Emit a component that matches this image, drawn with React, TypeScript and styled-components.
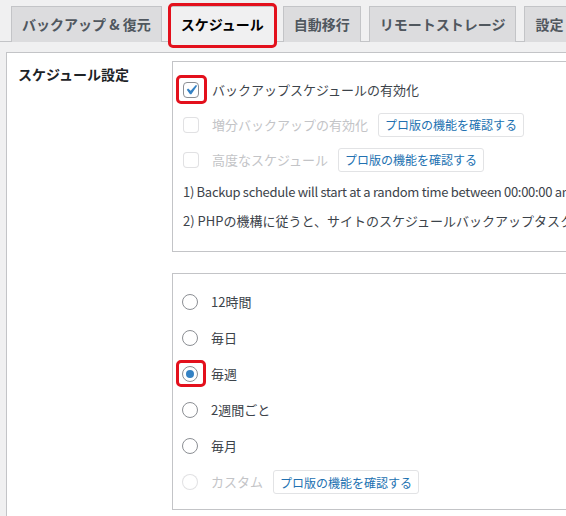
import React from "react";
import styled, { createGlobalStyle, css } from "styled-components";

const GlobalStyle = createGlobalStyle`
  html, body {
    margin: 0;
    padding: 0;
    background: #f0f0f1;
  }
  body {
    font-family: "Noto Sans CJK JP", "Noto Sans", sans-serif;
    color: #3c434a;
    font-size: 13px;
  }
`;

const Page = styled.div`
  width: 566px;
  height: 516px;
  overflow: hidden;
`;

const TabBar = styled.div`
  display: flex;
  gap: 8px;
  width: 900px;
  padding: 6px 0 0 11px;
  border-bottom: 1px solid #c3c4c7;
`;

const Tab = styled.div<{ $active?: boolean }>`
  position: relative;
  flex: none;
  padding: 5px 10px;
  line-height: 24px;
  font-size: 14px;
  font-weight: 700;
  white-space: nowrap;
  border: 1px solid #c3c4c7;
  border-bottom: none;
  margin-bottom: -1px;
  background: #dcdcde;
  color: #50575e;

  ${(p) =>
    p.$active &&
    css`
      background: #f0f0f1;
      color: #000;
      border-bottom: 1px solid #f0f0f1;
    `}
`;

const Highlight = styled.span<{ $t: number; $r: number; $b: number; $l: number }>`
  position: absolute;
  top: ${(p) => -p.$t}px;
  right: ${(p) => -p.$r}px;
  bottom: ${(p) => -p.$b}px;
  left: ${(p) => -p.$l}px;
  border: 3px solid #e3101c;
  border-radius: 5px;
  pointer-events: none;
  z-index: 2;
`;

const Panel = styled.div`
  margin: 10px 0 0 6px;
  width: 900px;
  min-height: 500px;
  background: #fff;
  border: 1px solid #c3c4c7;
  padding: 8px 0 0 11px;
  display: grid;
  grid-template-columns: 154px 1fr;
  align-items: start;
`;

const RowLabel = styled.div`
  padding-top: 3px;
  font-size: 14px;
  line-height: 20px;
  font-weight: 700;
  color: #1d2327;
`;

const Fields = styled.div`
  display: flex;
  flex-direction: column;
  gap: 21px;
`;

const Box = styled.div<{ $kind: "check" | "radio" }>`
  border: 1px solid #c3c4c7;
  background: #fff;
  ${(p) =>
    p.$kind === "check"
      ? css`
          padding: 10px 12px 16px 10px;
        `
      : css`
          padding: 10px 12px 9px 9px;
        `}
`;

const OptionRow = styled.label<{ $h: number }>`
  display: flex;
  align-items: center;
  height: ${(p) => p.$h}px;
  white-space: nowrap;
`;

const Control = styled.span<{ $round?: boolean; $disabled?: boolean }>`
  position: relative;
  flex: none;
  box-sizing: border-box;
  width: 16px;
  height: 16px;
  margin-right: 13px;
  border: 1px solid #8c8f94;
  border-radius: ${(p) => (p.$round ? "50%" : "4px")};
  background: #fff;
  display: flex;
  align-items: center;
  justify-content: center;

  ${(p) =>
    p.$disabled &&
    css`
      border-color: rgba(220, 220, 222, 0.85);
      background: rgba(255, 255, 255, 0.5);
    `}
`;

const Dot = styled.span`
  width: 8px;
  height: 8px;
  border-radius: 50%;
  background: #3582c4;
`;

const OptionText = styled.span<{ $disabled?: boolean }>`
  font-size: 13px;
  line-height: 20px;
  color: ${(p) => (p.$disabled ? "#c3c4c7" : "#3c434a")};
`;

const ProButton = styled.span`
  display: inline-flex;
  align-items: center;
  height: 24px;
  box-sizing: border-box;
  margin-left: 10px;
  padding: 0 6px;
  border: 1px solid #e2e3e5;
  border-radius: 3px;
  background: #fff;
  color: #2271b1;
  font-size: 12px;
`;

const Note = styled.p<{ $tight?: boolean }>`
  margin: 0;
  height: 29px;
  line-height: 29px;
  font-size: 13px;
  white-space: nowrap;
  color: #3c434a;
  letter-spacing: ${(p) => (p.$tight ? "-0.3px" : "0")};
`;

const CheckMark = () => (
  <svg width="20" height="20" viewBox="0 0 20 20" style={{ margin: "-3px" }}>
    <path d="M14.83 4.89l1.34.94-5.81 8.38H9.02L5.78 9.67l1.34-1.25 2.57 2.4z" fill="#3582c4" />
  </svg>
);

type Option = { label: string; checked?: boolean; disabled?: boolean; pro?: boolean };

const checkOptions: Option[] = [
  { label: "バックアップスケジュールの有効化", checked: true },
  { label: "増分バックアップの有効化", disabled: true, pro: true },
  { label: "高度なスケジュール", disabled: true, pro: true },
];

const radioOptions: Option[] = [
  { label: "12時間" },
  { label: "毎日" },
  { label: "毎週", checked: true },
  { label: "2週間ごと" },
  { label: "毎月" },
  { label: "カスタム", disabled: true, pro: true },
];

const tabs = ["バックアップ & 復元", "スケジュール", "自動移行", "リモートストレージ", "設定"];

const App: React.FC = () => {
  return (
    <Page>
      <GlobalStyle />
      <TabBar>
        {tabs.map((t) => (
          <Tab key={t} $active={t === "スケジュール"}>
            {t}
            {t === "スケジュール" && <Highlight $t={4} $r={3} $b={7} $l={3} />}
          </Tab>
        ))}
      </TabBar>

      <Panel>
        <RowLabel>スケジュール設定</RowLabel>
        <Fields>
          <Box $kind="check">
            {checkOptions.map((o) => (
              <OptionRow key={o.label} $h={35}>
                <Control $disabled={o.disabled}>
                  {o.checked && <CheckMark />}
                  {o.checked && <Highlight $t={8} $r={9} $b={7} $l={8} />}
                </Control>
                <OptionText $disabled={o.disabled}>{o.label}</OptionText>
                {o.pro && <ProButton>プロ版の機能を確認する</ProButton>}
              </OptionRow>
            ))}
            <Note $tight>
              1) Backup schedule will start at a random time between 00:00:00 and 00:59:59 of the scheduled time.
            </Note>
            <Note>
              2) PHPの機構に従うと、サイトのスケジュールバックアップタスクは、サイトに訪問者がいる場合にのみ実行されます。
            </Note>
          </Box>

          <Box $kind="radio">
            {radioOptions.map((o) => (
              <OptionRow key={o.label} $h={36}>
                <Control $round $disabled={o.disabled}>
                  {o.checked && <Dot />}
                  {o.checked && <Highlight $t={7} $r={9} $b={6} $l={7} />}
                </Control>
                <OptionText $disabled={o.disabled}>{o.label}</OptionText>
                {o.pro && <ProButton>プロ版の機能を確認する</ProButton>}
              </OptionRow>
            ))}
          </Box>
        </Fields>
      </Panel>
    </Page>
  );
};

export default App;
